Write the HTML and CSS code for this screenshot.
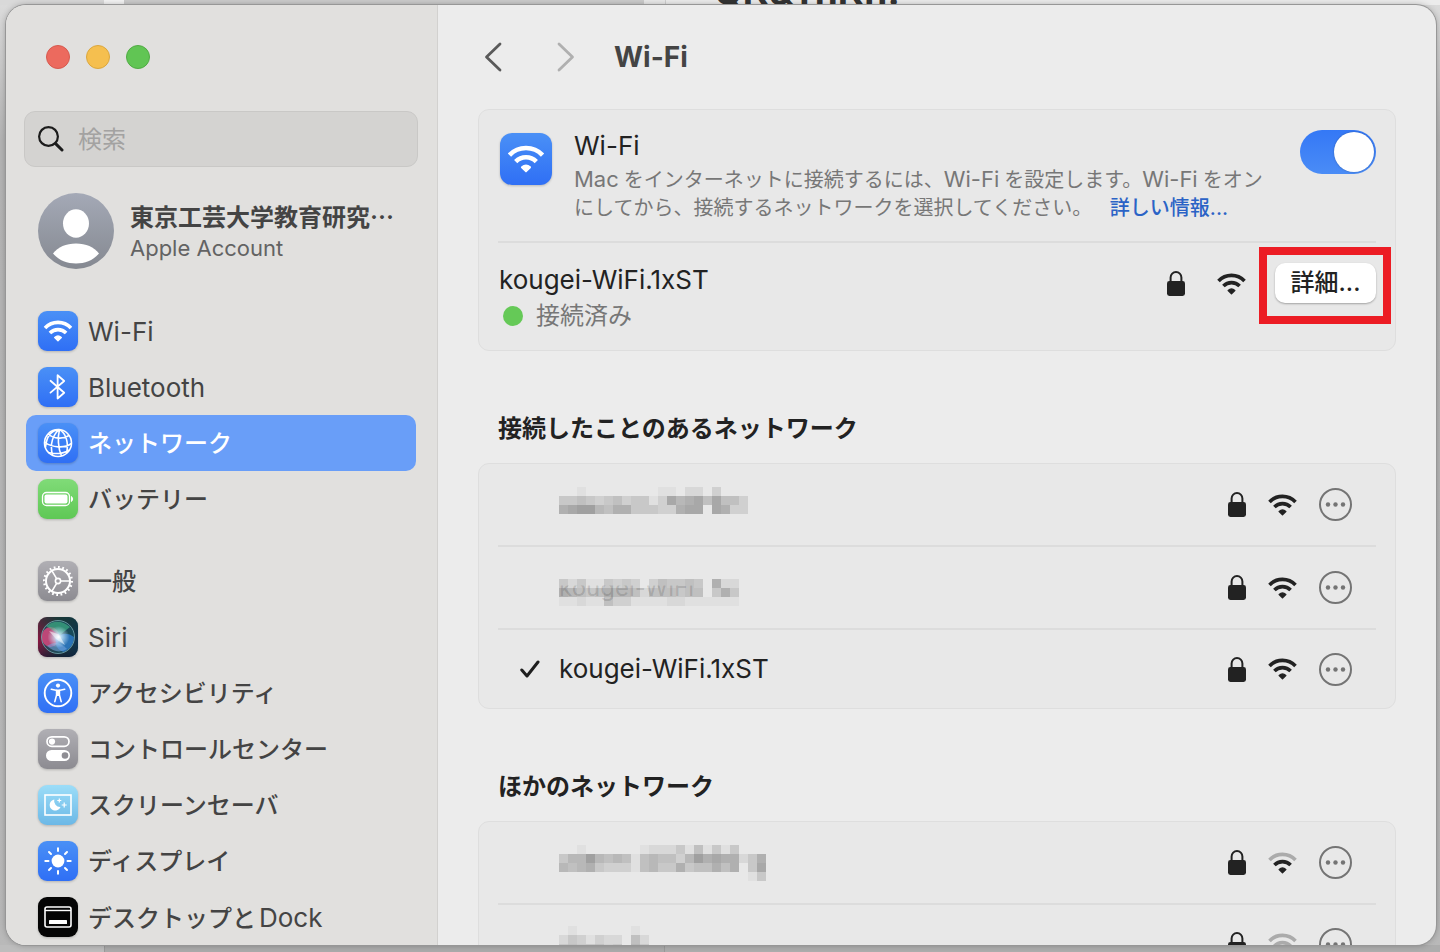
FILE: index.html
```html
<!DOCTYPE html>
<html lang="ja">
<head>
  <meta charset="UTF-8">
  <meta name="viewport" content="width=device-width, initial-scale=1.0">
  <title>Wi-Fi</title>
  <link rel="stylesheet" href="styles.css">
</head>
<body>
  <svg class="sprite" aria-hidden="true">
    <defs>
      <linearGradient id="blue" x1="0" y1="0" x2="0" y2="1">
        <stop offset="0" stop-color="#4a90f6"/><stop offset="1" stop-color="#2f6ff5"/>
      </linearGradient>
      <linearGradient id="grey" x1="0" y1="0" x2="0" y2="1">
        <stop offset="0" stop-color="#b0afb4"/><stop offset="1" stop-color="#8c8b91"/>
      </linearGradient>
      <linearGradient id="green" x1="0" y1="0" x2="0" y2="1">
        <stop offset="0" stop-color="#80db78"/><stop offset="1" stop-color="#5fc855"/>
      </linearGradient>
      <linearGradient id="sky" x1="0" y1="0" x2="0" y2="1">
        <stop offset="0" stop-color="#9cddf8"/><stop offset="1" stop-color="#6cb8e6"/>
      </linearGradient>
      <linearGradient id="avatar" x1="0" y1="0" x2="0" y2="1">
        <stop offset="0" stop-color="#a4a9b6"/><stop offset="1" stop-color="#858991"/>
      </linearGradient>
      <linearGradient id="siri-bg" x1="0" y1="0" x2="1" y2="0">
        <stop offset="0" stop-color="#8a1440"/><stop offset="0.5" stop-color="#24333a"/><stop offset="1" stop-color="#0f3350"/>
      </linearGradient>
      <linearGradient id="siri-dark" x1="0" y1="0" x2="0" y2="1">
        <stop offset="0" stop-color="#123b35"/><stop offset="0.6" stop-color="#123b35" stop-opacity="0"/><stop offset="1" stop-color="#0b1630"/>
      </linearGradient>
      <radialGradient id="siri-glow" cx="0.5" cy="0.5" r="0.5">
        <stop offset="0" stop-color="#fff"/><stop offset="0.3" stop-color="#cfeeff" stop-opacity="0.8"/><stop offset="1" stop-color="#cfeeff" stop-opacity="0"/>
      </radialGradient>
    </defs>
    <symbol id="i-wifi" viewBox="0 0 29 22">
      <path d="M1.500 7.900A18 18 0 0 1 27.500 7.900" fill="none" stroke="currentColor" stroke-width="3.600"/>
      <path d="M6.400 13A11.500 11.500 0 0 1 22.600 13" fill="none" stroke="currentColor" stroke-width="3.600"/>
      <path d="M11.200 17.500Q14.500 14.500 17.800 17.500L14.500 20.800Z" fill="currentColor" stroke="currentColor" stroke-width="1.400" stroke-linejoin="round"/>
    </symbol>
    <symbol id="i-wifi-weak" viewBox="0 0 29 22">
      <path d="M1.500 7.900A18 18 0 0 1 27.500 7.900" fill="none" stroke="#ababab" stroke-width="3.600"/>
      <path d="M6.400 13A11.500 11.500 0 0 1 22.600 13" fill="none" stroke="currentColor" stroke-width="3.600"/>
      <path d="M11.200 17.500Q14.500 14.500 17.800 17.500L14.500 20.800Z" fill="currentColor" stroke="currentColor" stroke-width="1.400" stroke-linejoin="round"/>
    </symbol>
    <symbol id="i-wifi-none" viewBox="0 0 29 22">
      <path d="M1.500 7.900A18 18 0 0 1 27.500 7.900M6.400 13A11.500 11.500 0 0 1 22.600 13" fill="none" stroke="#ababab" stroke-width="3.600"/>
      <path d="M11.200 17.500Q14.500 14.500 17.800 17.500L14.500 20.800Z" fill="currentColor"/>
    </symbol>
    <symbol id="i-lock" viewBox="0 0 18 25">
      <rect x="0" y="10" width="18" height="15" rx="2.4" fill="currentColor"/>
      <path d="M3.6 11V6.4a5.4 5.4 0 0 1 10.8 0V11" fill="none" stroke="currentColor" stroke-width="2"/>
    </symbol>
    <symbol id="i-more" viewBox="0 0 33 33">
      <circle cx="16.5" cy="16.5" r="15.5" fill="none" stroke="currentColor" stroke-width="2"/>
      <circle cx="9" cy="16.5" r="2.2" fill="currentColor"/>
      <circle cx="16.5" cy="16.5" r="2.2" fill="currentColor"/>
      <circle cx="24" cy="16.5" r="2.2" fill="currentColor"/>
    </symbol>
  </svg>

  <div class="behind" aria-hidden="true">QK&amp;TnKn.</div>

  <div class="window">
    <aside class="sidebar">
      <div class="lights">
        <button class="light red" aria-label="閉じる"></button>
        <button class="light yellow" aria-label="しまう"></button>
        <button class="light green" aria-label="拡大"></button>
      </div>

      <label class="search">
        <svg width="26" height="26" viewBox="0 0 26 26" fill="none" stroke="#1c1c1c" stroke-linecap="round"><circle cx="10.5" cy="10.5" r="9.4" stroke-width="2.2"/><path d="M17.6 17.6L24 24" stroke-width="3"/></svg>
        <input type="search" placeholder="検索" aria-label="検索">
      </label>

      <a class="account" href="#account">
        <svg width="76" height="76" viewBox="0 0 76 76"><circle cx="38" cy="38" r="38" fill="url(#avatar)"/><ellipse cx="38" cy="30.5" rx="13" ry="14.2" fill="#fff"/><path d="M15 60.5C20 54 28 50.5 38 50.5S56 54 61 60.5C55 67.500 47 70.500 38 70.500S21 67.500 15 60.500Z" fill="#fff"/></svg>
        <span class="account-text">
          <span class="account-name">東京工芸大学教育研究…</span>
          <span class="account-sub">Apple Account</span>
        </span>
      </a>

      <nav>
        <ul class="menu">
          <li><a href="#wifi">
            <svg class="tile" viewBox="0 0 40 40"><rect width="40" height="40" rx="9" fill="url(#blue)"/><use href="#i-wifi" x="5.500" y="9" width="29" height="22" color="#fff"/></svg>
            <span class="latin">Wi-Fi</span></a></li>
          <li><a href="#bluetooth">
            <svg class="tile" viewBox="0 0 40 40"><rect width="40" height="40" rx="9" fill="url(#blue)"/><path d="M12.500 13.800L26.200 25.800L19.600 31.500V8.200L26.200 14L12.500 25.600" fill="none" stroke="#fff" stroke-width="1.800" stroke-linejoin="round" stroke-linecap="round"/></svg>
            <span class="latin">Bluetooth</span></a></li>
          <li><a href="#network" class="active" aria-current="page">
            <svg class="tile" viewBox="0 0 40 40"><rect width="40" height="40" rx="9" fill="url(#blue)"/><g fill="none" stroke="#fff" stroke-width="1.600"><circle cx="20" cy="20" r="13.500"/><path d="M21.500 6.600C15 11 11.500 21 14.500 32.300M21.500 6.600C19.500 14 20 25 23.500 33M21.500 6.600C28 10 31 20 28.500 30.300M21.500 6.600C14 7 8.500 12 7.500 24.500M10 11C16 16 25 16.500 31 12.500M6.600 19C14 25 27 25.500 33.300 20.500M10 29.500C17 31 26 30.500 31.500 27"/></g></svg>
            <span>ネットワーク</span></a></li>
          <li><a href="#battery">
            <svg class="tile" viewBox="0 0 40 40"><rect width="40" height="40" rx="9" fill="url(#green)"/><rect x="4.500" y="13.500" width="27" height="13" rx="4" fill="none" stroke="#fff" stroke-width="1.300"/><rect x="6.500" y="15.500" width="23" height="9" rx="2" fill="#fff"/><path d="M33.500 17.500q2.600 2.500 0 5z" fill="#fff" stroke="#fff"/></svg>
            <span>バッテリー</span></a></li>
        </ul>
        <ul class="menu">
          <li><a href="#general">
            <svg class="tile" viewBox="0 0 40 40"><rect width="40" height="40" rx="9" fill="url(#grey)"/><g fill="none" stroke="#fff"><circle cx="20" cy="20" r="13.800" stroke-width="2.400" pathLength="40" stroke-dasharray="0.800 1.200"/><circle cx="20" cy="20" r="12" stroke-width="2"/><circle cx="20" cy="20" r="2.600" stroke-width="1.600"/><path d="M22.800 20H31M18.600 17.600L14 9.800M18.600 22.400L14 30.200" stroke-width="1.600"/></g></svg>
            <span>一般</span></a></li>
          <li><a href="#siri">
            <svg class="tile" viewBox="0 0 40 40"><rect width="40" height="40" rx="9" fill="url(#siri-bg)"/><rect width="40" height="40" rx="9" fill="url(#siri-dark)" opacity="0.600"/><circle cx="20" cy="20" r="16.500" fill="#1c5a68" opacity="0.600"/><ellipse cx="12.500" cy="20" rx="9" ry="10" fill="#e0487f" opacity="0.800"/><path d="M8 9Q20 0 32 10L22 18Z" fill="#43bd8c" opacity="0.600"/><path d="M18 21Q27 13 36 20Q36 30 26 35Q16 32 18 21Z" fill="#3489e8" opacity="0.650"/><path d="M9 29Q19 22 29 32Q19 38 9 29Z" fill="#72a3dc" opacity="0.600"/><circle cx="20.500" cy="20" r="11" fill="url(#siri-glow)"/><path d="M11 14L21 17.500L27 28L18 22Z" fill="#fff" opacity="0.500"/><circle cx="20" cy="20" r="16.500" fill="none" stroke="#75a9b0" stroke-width="1" opacity="0.800"/></svg>
            <span class="latin">Siri</span></a></li>
          <li><a href="#accessibility">
            <svg class="tile" viewBox="0 0 40 40"><rect width="40" height="40" rx="9" fill="url(#blue)"/><circle cx="20" cy="20" r="13.300" fill="none" stroke="#fff" stroke-width="1.900"/><circle cx="20" cy="12.600" r="2.100" fill="#fff"/><path d="M13.300 16.200L18 17.200H22L26.700 16.200M18.600 17V22L16.800 28.600M21.400 17V22L23.200 28.600" fill="none" stroke="#fff" stroke-width="1.600" stroke-linecap="round"/><path d="M18 17H22V23H18Z" fill="#fff"/></svg>
            <span>アクセシビリティ</span></a></li>
          <li><a href="#control-center">
            <svg class="tile" viewBox="0 0 40 40"><rect width="40" height="40" rx="9" fill="url(#grey)"/><rect x="9" y="7.800" width="22" height="9.600" rx="4.800" fill="none" stroke="#fff" stroke-width="1.700"/><circle cx="14" cy="12.600" r="3.100" fill="#fff"/><rect x="8" y="21" width="24" height="11" rx="5.500" fill="#fff"/><circle cx="27" cy="26.500" r="3.300" fill="#8e8d93"/></svg>
            <span>コントロールセンター</span></a></li>
          <li><a href="#screensaver">
            <svg class="tile" viewBox="0 0 40 40"><rect width="40" height="40" rx="9" fill="url(#sky)"/><rect x="7" y="10" width="26" height="20" fill="none" stroke="#fff" stroke-width="1.600"/><path d="M16.300 14.500A5.600 5.600 0 1 0 22.500 22A6 6 0 0 1 16.300 14.500Z" fill="#fff"/><path d="M21.300 13.500v4M19.300 15.500h4M26.200 17.500v5M23.700 20h5" stroke="#fff" stroke-width="1.200"/></svg>
            <span>スクリーンセーバ</span></a></li>
          <li><a href="#display">
            <svg class="tile" viewBox="0 0 40 40"><rect width="40" height="40" rx="9" fill="url(#blue)"/><circle cx="20" cy="20" r="6.400" fill="#fff"/><path d="M20 7.300V10M20 30V32.700M7.300 20H10.500M29.500 20H32.700M11 11L13 13M27 27L29 29M29 11L27 13M13 27L11 29" stroke="#fff" stroke-width="2" stroke-linecap="round"/></svg>
            <span>ディスプレイ</span></a></li>
          <li><a href="#dock">
            <svg class="tile" viewBox="0 0 40 40"><rect width="40" height="40" rx="9" fill="#050505"/><rect x="7" y="10" width="26" height="20" rx="2" fill="none" stroke="#fff" stroke-width="1.600"/><path d="M7 13.500H33" stroke="#fff" stroke-width="1.400"/><rect x="11" y="23" width="18" height="4" rx="0.600" fill="#fff"/></svg>
            <span>デスクトップと<span class="latin">Dock</span></span></a></li>
        </ul>
      </nav>
    </aside>

    <main class="content">
      <header class="toolbar">
        <button class="nav-btn" aria-label="戻る"><svg width="18" height="30" viewBox="0 0 18 30"><path d="M16 2L2.500 15L16 28" fill="none" stroke="#5a5a5a" stroke-width="2.800" stroke-linecap="round" stroke-linejoin="round"/></svg></button>
        <button class="nav-btn" aria-label="進む" disabled><svg width="18" height="30" viewBox="0 0 18 30"><path d="M2 2L15.500 15L2 28" fill="none" stroke="#b0b0b0" stroke-width="2.800" stroke-linecap="round" stroke-linejoin="round"/></svg></button>
        <h1>Wi-Fi</h1>
      </header>

      <section class="card">
        <div class="wifi-row">
          <svg class="wifi-tile" viewBox="0 0 52 52"><rect width="52" height="52" rx="12" fill="url(#blue)"/><use href="#i-wifi" x="7.500" y="12" width="37" height="28" color="#fff"/></svg>
          <div class="wifi-text">
            <label class="latin wifi-title" for="wifi-switch">Wi-Fi</label>
            <p><span class="latin">Mac</span>をインターネットに接続するには、<span class="latin">Wi-Fi</span>を設定します。<span class="latin">Wi-Fi</span>をオンにしてから、接続するネットワークを選択してください。 <a href="#more-info">詳しい情報...</a></p>
          </div>
          <input class="switch" id="wifi-switch" type="checkbox" role="switch" checked>
        </div>
        <div class="current-row">
          <div class="current-text">
            <div class="latin">kougei-WiFi.1xST</div>
            <div class="status"><span class="dot"></span>接続済み</div>
          </div>
          <svg class="lock" width="18" height="25"><use href="#i-lock"/></svg>
          <svg class="signal" width="29" height="22"><use href="#i-wifi"/></svg>
          <div class="marked">
            <button class="details">詳細...</button>
          </div>
        </div>
      </section>

      <h2>接続したことのあるネットワーク</h2>
      <ul class="card networks">
        <li>
          <span class="check"></span>
          <span class="name"><svg class="mosaic" data-rows="001000000001102203000 445434534413867858553 789965774443378808733 000000000000000000000"></svg></span>
          <svg width="18" height="25"><use href="#i-lock"/></svg>
          <svg width="29" height="22"><use href="#i-wifi"/></svg>
          <button class="more" aria-label="オプション"><svg width="33" height="33"><use href="#i-more"/></svg></button>
        </li>
        <li>
          <span class="check"></span>
          <span class="name"><svg class="mosaic" data-rows="00000000000000000000 42411434303544540722 76545766525554550474 11211533111122111111"></svg><span class="ghost">kougei-WiFi</span></span>
          <svg width="18" height="25"><use href="#i-lock"/></svg>
          <svg width="29" height="22"><use href="#i-wifi"/></svg>
          <button class="more" aria-label="オプション"><svg width="33" height="33"><use href="#i-more"/></svg></button>
        </li>
        <li>
          <span class="check"><svg width="20" height="18" viewBox="0 0 20 18"><path d="M1.800 10L7 16L18 2" fill="none" stroke="#1f1f1f" stroke-width="3" stroke-linecap="round" stroke-linejoin="round"/></svg></span>
          <span class="name latin">kougei-WiFi.1xST</span>
          <svg width="18" height="25"><use href="#i-lock"/></svg>
          <svg width="29" height="22"><use href="#i-wifi"/></svg>
          <button class="more" aria-label="オプション"><svg width="33" height="33"><use href="#i-more"/></svg></button>
        </li>
      </ul>

      <h2>ほかのネットワーク</h2>
      <ul class="card networks">
        <li>
          <span class="check"></span>
          <span class="name"><svg class="mosaic" data-rows="00100000012224151414000 46696565156553697877247 65674333156447455757048 00000000000000000000014"></svg></span>
          <svg width="18" height="25"><use href="#i-lock"/></svg>
          <svg width="29" height="22"><use href="#i-wifi-weak"/></svg>
          <button class="more" aria-label="オプション"><svg width="33" height="33"><use href="#i-more"/></svg></button>
        </li>
        <li>
          <span class="check"></span>
          <span class="name"><svg class="mosaic" data-rows="0100000010 2431322052 4544534064 0000000000"></svg></span>
          <svg width="18" height="25"><use href="#i-lock"/></svg>
          <svg width="29" height="22"><use href="#i-wifi-none"/></svg>
          <button class="more" aria-label="オプション"><svg width="33" height="33"><use href="#i-more"/></svg></button>
        </li>
      </ul>
    </main>
  </div>

  <script src="script.js"></script>
</body>
</html>
```

FILE: styles.css
```css
* {
  box-sizing: border-box;
}
body {
  margin: 0;
  height: 100vh;
  padding: 5px 4px 7px 6px;
  overflow: hidden;
  font-family: Inter, "Noto Sans CJK JP", sans-serif;
  font-size: 24px;
  line-height: 32px;
  color: #222;
  background:
    linear-gradient(90deg, #d9d9d9 104px, #f4f4f4 104px 124px, #cbcbcb 124px 644px, #e9e9e9 644px 665px, #cfcfcf 665px 666px, #ececec 666px) top / 100% 5px no-repeat,
    linear-gradient(90deg, #bdbdbd 104px, #999 104px 105px, #aaa 105px 664px, #999 664px 665px, #adadad 665px) bottom / 100% 7px no-repeat,
    linear-gradient(#dcdcdc, #b4b4b4 140px, #b9b9b9);
}
h1, h2, p, ul {
  margin: 0;
  padding: 0;
}
ul {
  list-style: none;
}
a {
  color: inherit;
  text-decoration: none;
}
button {
  padding: 0;
  border: none;
  background: none;
  font: inherit;
  color: inherit;
}
svg {
  display: block;
  flex: none;
}
.sprite {
  position: absolute;
  width: 0;
  height: 0;
}
.latin {
  font-size: 26px;
}
/* heading of the window underneath, only its lower edge shows */
.behind {
  position: absolute;
  top: -32px;
  left: 714px;
  font-size: 37px;
  line-height: 48px;
  font-weight: 700;
  color: #333;
}
.window {
  position: relative;
  display: flex;
  height: 100%;
  overflow: hidden;
  border-radius: 20px;
  background: #ececec;
  box-shadow: 0 0 0 1px #979797, 0 0 6px rgba(0,0,0,0.3);
}

/* sidebar */
.sidebar {
  flex: none;
  width: 432px;
  padding: 0 19px 0 18px;
  overflow: hidden;
  background: #e1e0de;
  border-right: 1px solid #d2d1cf;
  color: #444;
}
.lights {
  display: flex;
  align-items: center;
  gap: 16px;
  height: 104px;
  padding-left: 22px;
}
.light {
  width: 24px;
  height: 24px;
  border-radius: 50%;
}
.red {
  background: #ec6a5e;
  border: 1px solid #d65a4f;
}
.yellow {
  background: #f5bf4f;
  border: 1px solid #dba73e;
}
.green {
  background: #61c554;
  border: 1px solid #51ab44;
}
.search {
  display: flex;
  align-items: center;
  gap: 14px;
  height: 56px;
  margin-top: 2px;
  padding: 0 13px;
  border: 1px solid #c9c8c6;
  border-radius: 11px;
  background: #d4d3d1;
}
.search input {
  flex: 1;
  min-width: 0;
  padding: 2px 0 0;
  border: none;
  outline: none;
  background: none;
  font: inherit;
}
.search input::placeholder {
  color: #a3a2a1;
}
.account {
  display: flex;
  align-items: center;
  gap: 16px;
  margin: 26px 0 34px 14px;
}
.account-text {
  display: flex;
  flex-direction: column;
  padding-top: 2px;
  white-space: nowrap;
}
.account-name {
  font-family: "Noto Sans CJK JP", sans-serif;
  font-weight: 600;
}
.account-sub {
  font-size: 22px;
  color: #636363;
}
.menu {
  margin: 0 2px 26px 2px;
}
.menu a {
  display: flex;
  align-items: center;
  gap: 10px;
  height: 56px;
  padding-left: 12px;
  border-radius: 10px;
  font-weight: 500;
  white-space: nowrap;
}
.menu a.active {
  background: #699ef8;
  color: #fff;
}
.menu a > span {
  padding-top: 2px;
}
.menu .latin {
  font-weight: 400;
}
.menu span .latin {
  margin-left: 3px;
}
.tile {
  width: 40px;
  height: 40px;
  filter: drop-shadow(0 1px 1px rgba(0,0,0,0.2));
}

/* content */
.content {
  flex: 1;
  min-width: 0;
  padding: 0 40px;
  overflow: hidden;
}
.toolbar {
  display: flex;
  align-items: center;
  height: 104px;
  padding-left: 6px;
  gap: 55px;
}
.toolbar h1 {
  margin-left: -16px;
  font-size: 28px;
  font-weight: 700;
  color: #444;
}
.card {
  border: 1px solid #dedede;
  border-radius: 11px;
  background: #e8e8e8;
  padding: 0 19px;
}
.wifi-row {
  display: flex;
  align-items: flex-start;
  gap: 20px;
  padding: 20px 0 19px;
  border-bottom: 2px solid #dcdcdc;
}
.wifi-tile {
  width: 52px;
  height: 52px;
  margin: 3px 0 0 2px;
  filter: drop-shadow(0 1px 1px rgba(0,0,0,0.2));
}
.wifi-text {
  flex: 1;
  padding: 0 8px 0 2px;
}
.wifi-title {
  display: block;
}
.wifi-text p {
  margin-top: 3px;
  font-size: 20px;
  line-height: 28px;
  color: #777;
}
.wifi-text p .latin {
  margin-right: 5px;
  font-size: 22px;
}
.wifi-text p a {
  margin-left: 12px;
  color: #2b63c6;
  font-weight: 500;
}
.switch {
  appearance: none;
  flex: none;
  width: 76px;
  height: 44px;
  margin: 0;
  padding: 2px;
  border-radius: 22px;
  background: #c4c4c4;
}
.switch::before {
  content: "";
  display: block;
  width: 40px;
  height: 40px;
  border-radius: 50%;
  background: #fff;
  box-shadow: 0 0 2px rgba(0,0,0,0.3);
}
.switch:checked {
  background: linear-gradient(#3478f6, #4a8cf6);
}
.switch:checked::before {
  margin-left: auto;
}
.current-row {
  display: flex;
  align-items: flex-start;
  padding: 20px 0 18px;
}
.current-text {
  flex: 1;
  padding: 1px 0 0 1px;
}
.status {
  display: flex;
  align-items: center;
  gap: 13px;
  margin-top: 4px;
  padding-left: 4px;
  color: #777;
}
.dot {
  width: 20px;
  height: 20px;
  border-radius: 50%;
  background: #65c957;
}
.lock {
  margin: 8px 32px 0 0;
}
.signal {
  margin: 10px 29px 0 0;
}
.marked {
  position: relative;
}
/* red frame round the details button */
.marked::after {
  content: "";
  position: absolute;
  inset: -16px -15px -21px -16px;
  border: 8px solid #ec1c24;
  pointer-events: none;
}
.details {
  display: block;
  width: 101px;
  height: 40px;
  border-radius: 10px;
  background: #fff;
  box-shadow: 0 1px 2px rgba(0,0,0,0.3);
  font-weight: 500;
  white-space: nowrap;
}
h2 {
  margin: 62px 0 18px 20px;
  font-size: 24px;
  line-height: 32px;
  font-weight: 600;
}
.networks li {
  display: flex;
  align-items: center;
  height: 83px;
  padding: 0 24px 0 22px;
  border-bottom: 2px solid #dcdcdc;
}
.networks li:last-child {
  height: 78px;
  border-bottom: none;
}
.check {
  width: 39px;
}
.name {
  position: relative;
  flex: 1;
}
.networks li > svg {
  margin-right: 22px;
}
/* faint name under the blocks, only its lower half shows */
.ghost {
  position: absolute;
  top: 2px;
  left: 0;
  color: rgba(0,0,0,0.15);
  clip-path: inset(14px 0 0);
}
.more {
  color: #747474;
}
```

FILE: script.js
```js
// each digit is one 9px block, 0 is clear and 9 is the darkest
document.querySelectorAll('.mosaic').forEach(svg => {
  const rows = svg.dataset.rows.split(' ');
  const size = 9;
  svg.setAttribute('width', rows[0].length * size);
  svg.setAttribute('height', rows.length * size);
  rows.forEach((row, y) => {
    [...row].forEach((level, x) => {
      if (level === '0') return;
      const grey = 232 - level * 8;
      const rect = document.createElementNS('http://www.w3.org/2000/svg', 'rect');
      rect.setAttribute('x', x * size);
      rect.setAttribute('y', y * size);
      rect.setAttribute('width', size);
      rect.setAttribute('height', size);
      rect.setAttribute('fill', `rgb(${grey},${grey},${grey})`);
      svg.appendChild(rect);
    });
  });
});
```
